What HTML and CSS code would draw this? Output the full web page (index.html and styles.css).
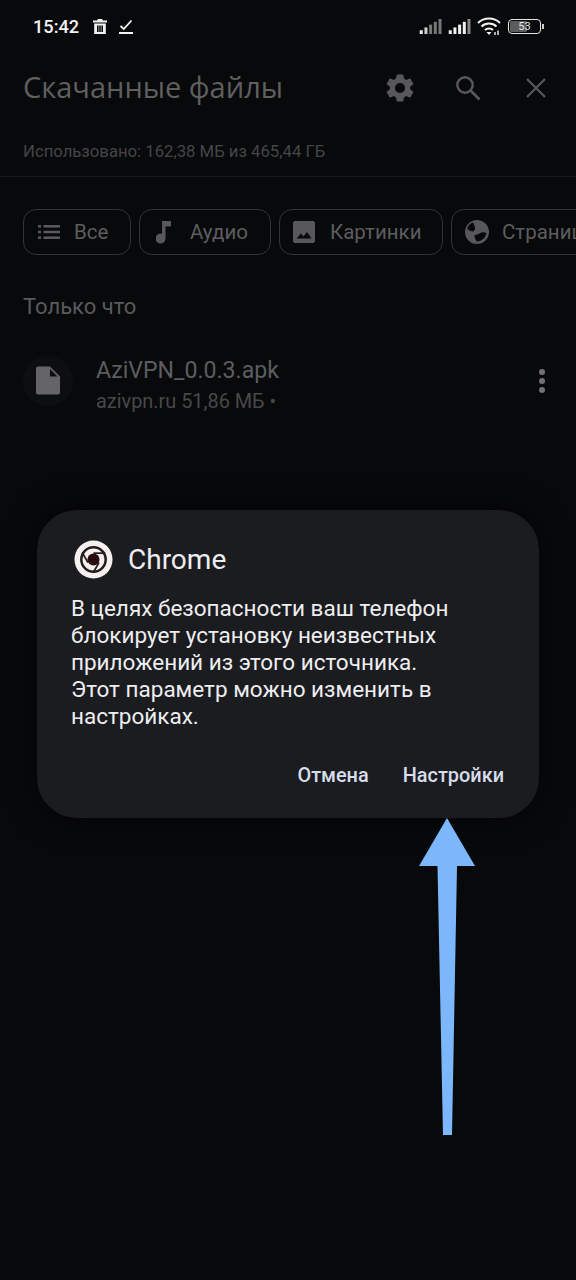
FILE: index.html
```html
<!DOCTYPE html>
<html lang="ru">
<head>
<meta charset="utf-8">
<title>Скачанные файлы</title>
<link rel="stylesheet" href="styles.css">
</head>
<body>
<div class="screen">
  <div class="status">
    <div class="status-left">
      <span class="time">15:42</span>
      <svg class="st-trash" viewBox="0 0 14 15"><path fill="#f2f2f2" d="M5 0h4l1 1.500h4v2H0v-2h4zM1.200 4.500h11.600V15H1.200zM4 6.500v6.500h1.600v-6.500zM6.200 6.500v6.500h1.600v-6.500zM8.400 6.500v6.500H10v-6.500z" fill-rule="evenodd"/></svg>
      <svg class="st-check" viewBox="0 0 14 15"><path fill="none" stroke="#f2f2f2" stroke-width="1.800" d="M1.500 7 4.800 10 12.500 1.500"/><path fill="#f2f2f2" d="M0 13h14v2H0z"/></svg>
    </div>
    <div class="status-right">
      <svg class="st-sig" viewBox="0 0 24 16"><rect x="0" y="12" width="3.200" height="4" fill="#f0f0f0"/><rect x="5" y="9" width="3.200" height="7" fill="#d0d0d0"/><rect x="10" y="6" width="3.200" height="10" fill="#777"/><rect x="15" y="3" width="3.200" height="13" fill="#777"/><rect x="20" y="0" width="3.200" height="16" fill="#777"/></svg>
      <svg class="st-sig" viewBox="0 0 24 16"><rect x="0" y="12" width="3.200" height="4" fill="#f0f0f0"/><rect x="5" y="9" width="3.200" height="7" fill="#f0f0f0"/><rect x="10" y="6" width="3.200" height="10" fill="#f0f0f0"/><rect x="15" y="3" width="3.200" height="13" fill="#f0f0f0"/><rect x="20" y="0" width="3.200" height="16" fill="#888"/></svg>
      <svg class="st-wifi" viewBox="0 0 24 18"><g fill="none" stroke="#f2f2f2" stroke-width="2"><path d="M1 6C7 0 17 0 23 6"/><path d="M4.500 9.500C8.500 5.500 15.500 5.500 19.500 9.500"/><path d="M8 13C10 11 14 11 16 13"/></g><path fill="#f2f2f2" d="M12 18l-2.500-3h5z"/><path fill="#aaa" d="M17 15h2v3h-2zM20 13.500h2v4.500h-2z"/></svg>
      <div class="battery"><div class="batt-body"><span class="batt-fill"></span><span class="batt-num">53</span></div><span class="batt-tip"></span></div>
    </div>
  </div>

  <div class="dim">
    <header class="header">
      <h1 class="title">Скачанные файлы</h1>
      <div class="actions">
        <svg class="ic-gear" viewBox="0 0 24 24"><path fill="#58585a" d="M19.140 12.940c.04-.3.060-.61.060-.94 0-.32-.02-.64-.07-.94l2.030-1.580a.49.49 0 0 0 .12-.61l-1.920-3.320a.488.488 0 0 0-.59-.22l-2.390.96c-.5-.38-1.030-.7-1.620-.94l-.36-2.540a.484.484 0 0 0-.48-.41h-3.840c-.24 0-.43.17-.47.41l-.36 2.540c-.59.24-1.130.57-1.620.94l-2.390-.96c-.22-.08-.47 0-.59.22L2.740 8.870c-.12.21-.08.47.12.61l2.030 1.580c-.05.3-.09.63-.09.94s.02.64.07.94l-2.030 1.580a.49.49 0 0 0-.12.61l1.920 3.320c.12.22.37.29.59.22l2.390-.96c.5.38 1.030.7 1.620.94l.36 2.540c.05.24.24.41.48.41h3.840c.24 0 .44-.17.47-.41l.36-2.540c.59-.24 1.130-.56 1.620-.94l2.390.96c.22.08.47 0 .59-.22l1.920-3.320c.12-.22.07-.47-.12-.61l-2.010-1.580zM12 15.600A3.600 3.600 0 1 1 12 8.400a3.600 3.600 0 0 1 0 7.200z"/></svg>
        <svg class="ic-search" viewBox="0 0 26 26"><circle cx="10" cy="10" r="7.700" fill="none" stroke="#58585a" stroke-width="2.400"/><path d="M15.500 15.500 24.500 24.500" stroke="#58585a" stroke-width="2.600" fill="none"/></svg>
        <svg class="ic-close" viewBox="0 0 20 20"><path d="M1 1 19 19M19 1 1 19" stroke="#58585a" stroke-width="2.200" fill="none"/></svg>
      </div>
    </header>
    <p class="usage">Использовано: 162,38 МБ из 465,44 ГБ</p>
    <div class="rule"></div>

    <div class="chips">
      <div class="chip chip-all">
        <svg class="chip-ic ic-list" viewBox="0 0 22 14"><g fill="#58585a"><rect x="0" y="0" width="3" height="2.600"/><rect x="0" y="5.700" width="3" height="2.600"/><rect x="0" y="11.400" width="3" height="2.600"/><rect x="5.500" y="0" width="16.500" height="2.600"/><rect x="5.500" y="5.700" width="16.500" height="2.600"/><rect x="5.500" y="11.400" width="16.500" height="2.600"/></g></svg>
        <span>Все</span>
      </div>
      <div class="chip chip-audio">
        <svg class="chip-ic ic-note" viewBox="0 0 15 23"><path fill="#58585a" d="M6 0h9v5.500H9.500V17.500A5 5 0 1 1 6 12.800z"/></svg>
        <span>Аудио</span>
      </div>
      <div class="chip chip-img">
        <svg class="chip-ic ic-img" viewBox="0 0 22 22"><path fill="#58585a" fill-rule="evenodd" d="M2 0h18a2 2 0 0 1 2 2v18a2 2 0 0 1-2 2H2a2 2 0 0 1-2-2V2a2 2 0 0 1 2-2zM3.500 17.500h15L14 11l-3.500 4.500L8 12.500z"/></svg>
        <span>Картинки</span>
      </div>
      <div class="chip chip-web">
        <svg class="chip-ic ic-globe" viewBox="0 0 24 24"><path fill="#58585a" fill-rule="evenodd" d="M12 0a12 12 0 1 1 0 24a12 12 0 0 1 0-24zM8 2.500C5 3.500 2.800 6 2.200 9c2 1.500 4 2.500 5.800 2.500 1.500-1 2.500-2.500 2-4.500C9.500 5.500 8.500 4 8 2.500zM21.500 13c-2.500-1-5-1-7 .5-1.500 1-3 1-5 1.500 0 2.500 1 5 2.500 6.500 4.800 0 8.500-3.800 9.500-8.500z"/></svg>
        <span>Страницы</span>
      </div>
    </div>

    <h2 class="section">Только что</h2>

    <div class="file">
      <div class="file-badge">
        <svg class="ic-file" viewBox="0 0 24 28"><path fill="#646466" fill-rule="evenodd" d="M2 0h12l10 10v16a2 2 0 0 1-2 2H2a2 2 0 0 1-2-2V2a2 2 0 0 1 2-2zM14 2.500V10h7.500z"/></svg>
      </div>
      <div class="file-text">
        <div class="file-name">AziVPN_0.0.3.apk</div>
        <div class="file-meta">azivpn.ru 51,86 МБ •</div>
      </div>
      <div class="kebab"><i></i><i></i><i></i></div>
    </div>
  </div>

  <section class="dialog">
    <div class="dialog-head">
      <svg class="chrome" viewBox="0 0 40 40">
        <circle cx="20" cy="20" r="19.500" fill="#f6f1ee"/>
        <circle cx="20" cy="20" r="12.500" fill="none" stroke="#241c1e" stroke-width="2.600"/>
        <circle cx="20" cy="20" r="6.200" fill="#2a0a0e"/>
        <g stroke="#241c1e" stroke-width="1.800" fill="none">
          <path d="M20 13.500H32"/>
          <path d="M20 13.500H32" transform="rotate(120 20 20)"/>
          <path d="M20 13.500H32" transform="rotate(240 20 20)"/>
        </g>
      </svg>
      <h3 class="dialog-title">Chrome</h3>
    </div>
    <p class="dialog-body">В целях безопасности ваш телефон блокирует установку неизвестных приложений из этого источника.<br>Этот параметр можно изменить в настройках.</p>
    <div class="dialog-actions">
      <span class="btn">Отмена</span>
      <span class="btn">Настройки</span>
    </div>
  </section>

  <svg class="arrow" viewBox="0 0 56 317"><path fill="#7db7fb" d="M28 0 56 48H38L33 317H24L18.500 48H0z"/></svg>
</div>
</body>
</html>
```
FILE: styles.css
```css
* { box-sizing: border-box; }
html, body { margin: 0; padding: 0; }
body { background: #08090b; font-family: Roboto, "Liberation Sans", sans-serif; }
.screen { position: relative; width: 576px; height: 1280px; overflow: hidden; background: #08090b; }

.status { display: flex; justify-content: space-between; align-items: center; height: 52px; padding: 0 32px 0 33px; }
.status-left { display: flex; align-items: center; gap: 0; }
.time { color: #f2f2f2; font-size: 18.200px; font-weight: 500; width: 60px; }
.st-trash { width: 14px; height: 15px; margin-right: 12px; }
.st-check { width: 14px; height: 15px; }
.status-right { display: flex; align-items: center; padding-right: 0; }
.st-sig { width: 24px; height: 15px; margin-right: 5px; }
.st-wifi { width: 24px; height: 18px; margin: 0 7px 0 0; }
.battery { display: flex; align-items: center; }
.batt-body { position: relative; width: 33px; height: 15px; border: 1.500px solid #e6e6e6; border-radius: 4px; display: flex; align-items: center; justify-content: center; overflow: hidden; }
.batt-fill { position: absolute; left: 1px; top: 1px; bottom: 1px; width: 17px; background: #5c5c5c; border-radius: 1.500px; }
.batt-num { position: relative; color: #e6e6e6; font-size: 11px; line-height: 1; }
.batt-tip { width: 2px; height: 5px; background: #ccc; margin-left: 1px; }

.header { display: flex; justify-content: space-between; align-items: center; height: 72px; padding: 0 30px 0 23px; }
.title { margin: 0 0 4px; color: #5f5f60; font-family: "Open Sans", sans-serif; font-size: 29px; font-weight: 400; }
.actions { display: flex; align-items: center; }
.ic-gear { width: 34px; height: 34px; margin-right: 38px; }
.ic-search { width: 26px; height: 26px; margin-right: 45px; }
.ic-close { width: 20px; height: 20px; }
.usage { margin: 18px 0 0 23px; color: #454547; font-size: 16.700px; line-height: 20px; }
.rule { height: 1px; background: #1c1c1e; margin-top: 14px; }

.chips { display: flex; gap: 8px; padding: 32px 0 0 23px; white-space: nowrap; }
.chip { flex: none; display: flex; align-items: center; height: 46px; border: 1px solid #343436; border-radius: 13px; color: #5d5d5f; font-size: 20.500px; }
.chip-ic { flex: none; }
.chip-all { width: 108px; padding-left: 14px; }
.chip-audio { width: 132px; padding-left: 16px; }
.chip-img { width: 164px; padding-left: 13px; }
.chip-web { width: 160px; padding-left: 13px; }
.ic-list { width: 22px; height: 14px; margin-right: 14px; }
.ic-note { width: 15px; height: 23px; margin-right: 19px; }
.ic-img { width: 22px; height: 22px; margin-right: 15px; }
.ic-globe { width: 24px; height: 24px; margin-right: 13px; }

.section { margin: 38px 0 0 23px; color: #5a5a5c; font-size: 22px; font-weight: 400; line-height: 28px; }

.file { display: flex; align-items: center; margin-top: 24px; padding: 0 31px 0 23px; }
.file-badge { flex: none; width: 50px; height: 50px; border-radius: 50%; background: #0d0e10; display: flex; align-items: center; justify-content: center; }
.ic-file { width: 24px; height: 29px; }
.file-text { flex: 1; margin-left: 23px; padding-top: 11px; }
.file-name { color: #5d5d5f; font-size: 23.100px; line-height: 30px; }
.file-meta { color: #48484a; font-size: 19.900px; line-height: 28px; margin-top: 2px; }
.kebab { display: flex; flex-direction: column; gap: 3px; padding-right: 0; }
.kebab i { display: block; width: 6px; height: 6px; border-radius: 50%; background: #727274; }

.dialog { position: absolute; left: 37px; top: 510px; width: 502px; height: 308px; padding: 30px 35px 0 34px; background: #1b1c20; border-radius: 40px; box-shadow: 0 0 30px rgba(0,0,0,.6); }
.dialog-head { display: flex; align-items: center; padding-left: 3px; }
.chrome { width: 39px; height: 39px; flex: none; }
.dialog-title { margin: 0 0 0 15px; color: #eeeef0; font-size: 28px; font-weight: 400; line-height: 39px; }
.dialog-body { margin: 16px 0 0 0; color: #eeeef0; font-size: 22.500px; line-height: 27px; }
.dialog-actions { display: flex; justify-content: flex-end; gap: 34px; margin-top: 33px; }
.btn { color: #d6dcec; font-size: 19.900px; font-weight: 500; line-height: 26px; }

.arrow { position: absolute; left: 419px; top: 818px; width: 56px; height: 317px; }
```
